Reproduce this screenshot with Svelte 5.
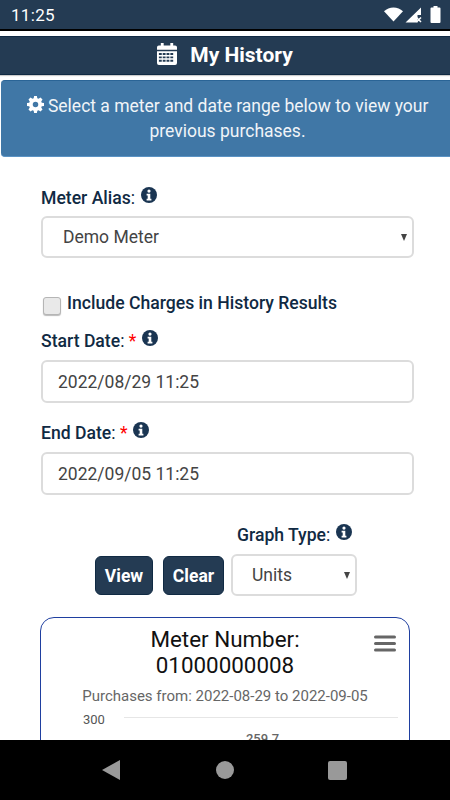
<script>
  let meter = $state('Demo Meter');
  let graphType = $state('Units');
  let includeCharges = $state(false);
  let startDate = $state('2022/08/29 11:25');
  let endDate = $state('2022/09/05 11:25');

  function clear() {
    startDate = '';
    endDate = '';
  }
</script>

{#snippet infoIcon()}
  <svg class="info" viewBox="0 0 16 16" aria-hidden="true">
    <circle cx="8" cy="8" r="8" fill="#1a3552" />
    <circle cx="8" cy="4.1" r="1.6" fill="#fff" />
    <path d="M5.6 6.8h3.7v5h1.1v1.7H5.6v-1.7h1.1V8.5H5.6z" fill="#fff" />
  </svg>
{/snippet}

<div class="phone">
  <div class="status">
    <span class="time">11:25</span>
    <div class="status-icons">
      <svg width="19" height="15" viewBox="0 0 19 15"><path d="M0 4.2C2.6 1.7 5.9.4 9.5.4s6.900 1.300 9.500 3.800L9.500 14.600z" fill="#fff" /></svg>
      <svg width="17" height="16" viewBox="0 0 17 16">
        <path d="M16 .5V8h-3.500v7.500H.5z" fill="#fff" />
        <path d="M11.500 10.500l4.500 4.500M16 10.500l-4.500 4.500" stroke="#fff" stroke-width="1.500" />
      </svg>
      <svg width="11" height="17" viewBox="0 0 11 17"><path d="M3.500 0h4v1.500h2a1 1 0 0 1 1 1V16a1 1 0 0 1-1 1h-8a1 1 0 0 1-1-1V2.500a1 1 0 0 1 1-1h2z" fill="#fff" /></svg>
    </div>
  </div>

  <main class="content">
    <header class="title-bar">
      <svg class="calendar" viewBox="0 0 21 23" preserveAspectRatio="none" aria-hidden="true">
        <path d="M0 4.500a2 2 0 0 1 2-2h2V0h3v2.500h7V0h3v2.500h2a2 2 0 0 1 2 2V7H0z" fill="#fff" />
        <path fill-rule="evenodd" d="M0 8.500h21V21a2 2 0 0 1-2 2H2a2 2 0 0 1-2-2z M2 10.500v2h3v-2z M6 10.500v2h3v-2z M10 10.500v2h3v-2z M14 10.500v2h3v-2z M2 14v2h3v-2z M6 14v2h3v-2z M10 14v2h3v-2z M14 14v2h3v-2z M2 17.500v2h3v-2z M6 17.500v2h3v-2z M10 17.500v2h3v-2z M14 17.500v2h3v-2z" fill="#fff" />
      </svg>
      <h1>My History</h1>
    </header>

    <div class="notice">
      <svg class="gear" viewBox="0 0 16 16" aria-hidden="true">
        <path fill-rule="evenodd" d="M6.700 0h2.600l.4 2.100 1.200.5 1.800-1.200 1.900 1.900-1.200 1.800.5 1.200 2.100.4v2.600l-2.100.4-.5 1.200 1.200 1.800-1.900 1.900-1.800-1.200-1.200.5-.4 2.100H6.700l-.4-2.100-1.200-.5-1.800 1.200-1.900-1.900 1.200-1.800-.5-1.200L0 9.300V6.700l2.100-.4.500-1.200-1.200-1.800 1.900-1.900 1.800 1.200 1.200-.5z M8 5.400a2.600 2.600 0 1 0 0 5.200 2.600 2.600 0 0 0 0-5.200z" fill="#fff" />
      </svg>
      Select a meter and date range below to view your previous purchases.
    </div>

    <form class="history-form" onsubmit={(e) => e.preventDefault()}>
      <label class="field-label" for="meter">Meter Alias<span class="colon">:</span> {@render infoIcon()}</label>
      <div class="select-wrap meter-select">
        <select id="meter" bind:value={meter}>
          <option>Demo Meter</option>
        </select>
      </div>

      <label class="charges">
        <input type="checkbox" bind:checked={includeCharges} />
        <span>Include Charges in History Results</span>
      </label>

      <label class="field-label start-label" for="start">Start Date<span class="colon">:</span> <span class="req">*</span> {@render infoIcon()}</label>
      <input id="start" class="date-input" type="text" bind:value={startDate} />

      <label class="field-label end-label" for="end">End Date<span class="colon">:</span> <span class="req">*</span> {@render infoIcon()}</label>
      <input id="end" class="date-input" type="text" bind:value={endDate} />

      <div class="actions">
        <button type="submit" class="btn view-btn">View</button>
        <button type="button" class="btn clear-btn" onclick={clear}>Clear</button>
        <div class="graph-type">
          <label class="field-label" for="graph">Graph Type<span class="colon">:</span> {@render infoIcon()}</label>
          <div class="select-wrap">
            <select id="graph" bind:value={graphType}>
              <option>Units</option>
              <option>Value</option>
            </select>
          </div>
        </div>
      </div>
    </form>

    <section class="chart-card">
      <svg class="menu" viewBox="0 0 22 17" aria-hidden="true">
        <path d="M1.500 2h19M1.500 8.500h19M1.500 15h19" stroke="#666" stroke-width="3" stroke-linecap="round" />
      </svg>
      <h2>Meter Number:<br />01000000008</h2>
      <p class="subtitle">Purchases from: 2022-08-29 to 2022-09-05</p>
      <div class="axis-row">
        <span class="tick">300</span>
        <div class="grid-line"></div>
      </div>
      <div class="bar-value">259.7</div>
    </section>
  </main>

  <nav class="nav-bar">
    <svg class="back" width="18" height="20" viewBox="0 0 18 20"><path d="M18 0v20L0 10z" fill="#999" /></svg>
    <span class="home"></span>
    <span class="recent"></span>
  </nav>
</div>

<style>
  :global(body) {
    margin: 0;
    background: #fff;
  }

  .phone {
    width: 450px;
    height: 800px;
    display: flex;
    flex-direction: column;
    overflow: hidden;
    font-family: Roboto, "Liberation Sans", sans-serif;
    color: #102a43;
  }

  .status {
    flex: none;
    height: 29px;
    display: flex;
    align-items: center;
    justify-content: space-between;
    padding: 0 9px 0 11px;
    background: #243b53;
    color: #fff;
    border-bottom: 2px solid #000;
  }

  .time {
    font-size: 17px;
    letter-spacing: 0.3px;
  }

  .status-icons {
    display: flex;
    align-items: center;
    gap: 2px;
  }

  .status-icons svg:last-child {
    margin-left: 6px;
  }

  .content {
    flex: 1;
    min-height: 0;
    overflow: hidden;
    padding-top: 5px;
  }

  .title-bar {
    height: 37px;
    display: flex;
    align-items: center;
    justify-content: center;
    gap: 13px;
    background: #243b53;
    border-top: 1px solid #102a43;
    border-bottom: 1px solid #102a43;
    box-shadow: 0 1px 1px #ccc;
  }

  .calendar {
    width: 20px;
    height: 22px;
    margin-bottom: 4px;
  }

  h1 {
    margin: 0 0 2px;
    font-size: 21px;
    font-weight: 700;
    color: #fff;
  }

  .notice {
    margin: 5px 0 0 1px;
    height: 77px;
    box-sizing: border-box;
    padding: 13px 10px 0 14px;
    background: #4077a6;
    border-top: 1px solid #2a6496;
    border-bottom: 1px solid #5b93c4;
    border-radius: 4px 0 0 4px;
    color: #f0f4f8;
    font-size: 17.500px;
    line-height: 25px;
    text-align: center;
  }

  .gear {
    width: 17px;
    height: 17px;
    vertical-align: -0.5px;
  }

  .history-form {
    padding: 30px 36px 0 41px;
  }

  .field-label {
    display: block;
    font-size: 17.600px;
    font-weight: 500;
    line-height: 22px;
    color: #102a43;
  }

  .colon {
    font-weight: 400;
  }

  .req {
    color: #f00;
    font-weight: 400;
  }

  .info {
    width: 16px;
    height: 16px;
    margin-left: 1px;
    vertical-align: 1px;
  }

  .select-wrap {
    position: relative;
    margin-top: 7px;
  }

  .select-wrap::after {
    content: "";
    position: absolute;
    right: 7px;
    top: 50%;
    margin-top: -3px;
    border-left: 3.500px solid transparent;
    border-right: 3.500px solid transparent;
    border-top: 7px solid #444;
    pointer-events: none;
  }

  select {
    display: block;
    width: 100%;
    height: 42px;
    box-sizing: border-box;
    padding: 0 20px;
    appearance: none;
    background: #fff;
    border: 2px solid #dcdcdc;
    border-radius: 6px;
    font: 400 17.500px Roboto, "Liberation Sans", sans-serif;
    color: #444;
  }

  .charges {
    display: flex;
    align-items: center;
    gap: 6px;
    height: 22px;
    margin-top: 34px;
    font-size: 17.600px;
    font-weight: 500;
    line-height: 22px;
    color: #102a43;
  }

  .charges input {
    appearance: none;
    flex: none;
    width: 18px;
    height: 18px;
    margin: 5px 0 0 2px;
    background: #e9e9e9;
    border: 1px solid #b5b5b5;
    border-radius: 3px;
    box-shadow: 0 1px 1px #bbb;
  }

  .charges input:checked {
    background: #243b53;
  }

  .start-label {
    margin-top: 16px;
  }

  .end-label {
    margin-top: 19px;
  }

  .date-input {
    display: block;
    width: 100%;
    height: 43px;
    box-sizing: border-box;
    margin-top: 8px;
    padding: 0 15px;
    border: 2px solid #dcdcdc;
    border-radius: 6px;
    font: 400 17.500px Roboto, "Liberation Sans", sans-serif;
    color: #444;
    outline: none;
  }

  .actions {
    display: flex;
    align-items: flex-end;
    justify-content: center;
    gap: 10px;
    margin-top: 29px;
    padding-right: 3px;
  }

  .btn {
    height: 39px;
    margin-bottom: 1px;
    padding: 0;
    background: #243b53;
    border: 1px solid #102a43;
    border-radius: 6px;
    color: #fff;
    font: 700 17.500px Roboto, "Liberation Sans", sans-serif;
  }

  .view-btn {
    width: 58px;
  }

  .clear-btn {
    width: 61px;
  }

  .graph-type {
    margin-left: -3px;
  }

  .graph-type .field-label {
    margin-left: 6px;
  }

  .graph-type .select-wrap {
    margin-top: 8px;
  }

  .graph-type select {
    width: 126px;
    padding: 0 19px;
  }

  .chart-card {
    position: relative;
    margin: 21px 40px 0 40px;
    height: 200px;
    box-sizing: border-box;
    padding: 8px 16px 0;
    border: 1px solid #1f3fa0;
    border-radius: 14px;
    text-align: center;
    color: #111;
  }

  .menu {
    position: absolute;
    top: 17px;
    right: 13px;
    width: 22px;
    height: 17px;
  }

  h2 {
    margin: 0;
    font-size: 22.400px;
    font-weight: 400;
    line-height: 26px;
  }

  .subtitle {
    margin: 8px -10px 0;
    font-size: 15px;
    line-height: 20px;
    color: #666;
    white-space: nowrap;
  }

  .axis-row {
    display: flex;
    align-items: center;
    gap: 19px;
    margin: 4px -5px 0 26px;
    font-size: 13px;
    color: #555;
  }

  .tick {
    position: relative;
    top: 2px;
  }

  .grid-line {
    flex: 1;
    height: 1px;
    background: #e6e6e6;
  }

  .bar-value {
    margin: 6px 0 0 75px;
    font-size: 13px;
    font-weight: 500;
    color: #666;
  }

  .nav-bar {
    flex: none;
    height: 60px;
    display: flex;
    align-items: center;
    justify-content: center;
    gap: 94px;
    padding-right: 1px;
    background: #000;
    position: relative;
    z-index: 1;
  }

  .back {
    margin-right: 2px;
  }

  .home {
    width: 18px;
    height: 18px;
    border-radius: 50%;
    background: #999;
  }

  .recent {
    width: 19px;
    height: 19px;
    border-radius: 2px;
    background: #999;
  }
</style>
